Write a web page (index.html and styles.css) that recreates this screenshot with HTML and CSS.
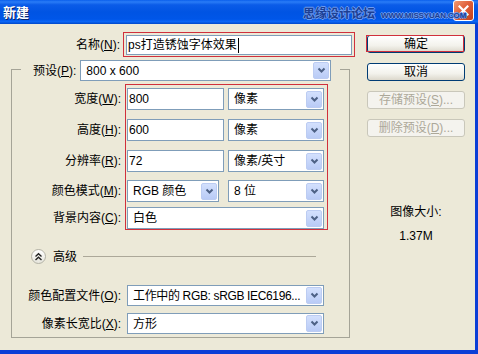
FILE: index.html
```html
<!DOCTYPE html>
<html lang="zh-CN">
<head>
<meta charset="utf-8">
<title>新建</title>
<link rel="stylesheet" href="styles.css">
</head>
<body>
<div class="window">
  <header class="titlebar">
    <span class="title">新建</span>
    <span class="watermark">思缘设计论坛<span class="wm-url">WWW.MISSYUAN.COM</span></span>
    <span class="close"><svg width="11" height="11" viewBox="0 0 11 11"><path d="M1.5 1.5 L9.5 9.5 M9.5 1.5 L1.5 9.5" stroke="#fff" stroke-width="2.2" fill="none" stroke-linecap="square"/></svg></span>
  </header>
  <div class="client">
    <div class="main">
      <div class="name-row">
        <span class="lbl name-lbl">名称(<u>N</u>):</span>
        <div class="mark name-mark">
          <div class="input name-input"><span>ps打造锈蚀字体效果</span><span class="caret"></span></div>
        </div>
      </div>
      <div class="group">
        <div class="group-head">
          <span class="lbl head-lbl">预设(<u>P</u>):</span>
          <div class="select preset"><span class="val">800 x 600</span><span class="drop"><svg width="9" height="7" viewBox="0 0 9 7"><path d="M1.5 1.5 L4.5 4.5 L7.5 1.5" stroke="#4d6185" stroke-width="2" fill="none"/></svg></span></div>
        </div>
        <div class="dims">
          <div class="dim-labels">
            <span class="row">宽度(<u>W</u>):</span>
            <span class="row">高度(<u>H</u>):</span>
            <span class="row">分辨率(<u>R</u>):</span>
            <span class="row g8">颜色模式(<u>M</u>):</span>
            <span class="row g5">背景内容(<u>C</u>):</span>
          </div>
          <div class="mark dim-mark">
            <div class="row">
              <div class="input num">800</div>
              <div class="select unit"><span class="val">像素</span><span class="drop"><svg width="9" height="7" viewBox="0 0 9 7"><path d="M1.5 1.5 L4.5 4.5 L7.5 1.5" stroke="#4d6185" stroke-width="2" fill="none"/></svg></span></div>
            </div>
            <div class="row">
              <div class="input num">600</div>
              <div class="select unit"><span class="val">像素</span><span class="drop"><svg width="9" height="7" viewBox="0 0 9 7"><path d="M1.5 1.5 L4.5 4.5 L7.5 1.5" stroke="#4d6185" stroke-width="2" fill="none"/></svg></span></div>
            </div>
            <div class="row">
              <div class="input num">72</div>
              <div class="select unit"><span class="val">像素/英寸</span><span class="drop"><svg width="9" height="7" viewBox="0 0 9 7"><path d="M1.5 1.5 L4.5 4.5 L7.5 1.5" stroke="#4d6185" stroke-width="2" fill="none"/></svg></span></div>
            </div>
            <div class="row g8">
              <div class="select mode"><span class="val">RGB 颜色</span><span class="drop"><svg width="9" height="7" viewBox="0 0 9 7"><path d="M1.5 1.5 L4.5 4.5 L7.5 1.5" stroke="#4d6185" stroke-width="2" fill="none"/></svg></span></div>
              <div class="select unit"><span class="val">8 位</span><span class="drop"><svg width="9" height="7" viewBox="0 0 9 7"><path d="M1.5 1.5 L4.5 4.5 L7.5 1.5" stroke="#4d6185" stroke-width="2" fill="none"/></svg></span></div>
            </div>
            <div class="row g5">
              <div class="select full"><span class="val">白色</span><span class="drop"><svg width="9" height="7" viewBox="0 0 9 7"><path d="M1.5 1.5 L4.5 4.5 L7.5 1.5" stroke="#4d6185" stroke-width="2" fill="none"/></svg></span></div>
            </div>
          </div>
        </div>
        <div class="advanced">
          <span class="adv-icon"><svg width="9" height="9" viewBox="0 0 9 9"><path d="M1.5 4.5 L4.5 1.8 L7.5 4.5 M1.5 8 L4.5 5.3 L7.5 8" stroke="#222" stroke-width="1.4" fill="none"/></svg></span>
          <span class="adv-text">高级</span>
          <span class="adv-line"></span>
        </div>
        <div class="field-row first">
          <span class="lbl field-lbl">颜色配置文件(<u>O</u>):</span>
          <div class="select full"><span class="val tight">工作中的 RGB: sRGB IEC6196...</span><span class="drop"><svg width="9" height="7" viewBox="0 0 9 7"><path d="M1.5 1.5 L4.5 4.5 L7.5 1.5" stroke="#4d6185" stroke-width="2" fill="none"/></svg></span></div>
        </div>
        <div class="field-row">
          <span class="lbl field-lbl">像素长宽比(<u>X</u>):</span>
          <div class="select full"><span class="val">方形</span><span class="drop"><svg width="9" height="7" viewBox="0 0 9 7"><path d="M1.5 1.5 L4.5 4.5 L7.5 1.5" stroke="#4d6185" stroke-width="2" fill="none"/></svg></span></div>
        </div>
      </div>
    </div>
    <aside class="side">
      <button class="btn ok">确定</button>
      <button class="btn">取消</button>
      <button class="btn disabled">存储预设(<u>S</u>)...</button>
      <button class="btn disabled">删除预设(<u>D</u>)...</button>
      <div class="img-size">图像大小:</div>
      <div class="img-val">1.37M</div>
    </aside>
  </div>
</div>
</body>
</html>
```

FILE: styles.css
```css
* { box-sizing: border-box; }
body {
  margin: 0;
  font: 12px/14px "Liberation Sans", "Noto Sans CJK SC", sans-serif;
  color: #000;
  background: #ece9d8;
}
u { text-decoration: underline; text-underline-offset: 1px; }

.window {
  width: 478px;
  height: 354px;
  display: flex;
  flex-direction: column;
  background: #ece9d8;
  overflow: hidden;
}

/* title bar */
.titlebar {
  position: relative;
  height: 24px;
  flex: none;
  display: flex;
  align-items: center;
  padding-left: 3px;
  background: linear-gradient(to bottom, #0a5fec 0%, #2a7cf6 8%, #0b5ce8 20%, #0054e3 50%, #0056e8 80%, #0a66f6 90%, #0047c8 100%);
}
.title {
  flex: 1;
  color: #fff;
  font: bold 13px/16px "Noto Sans CJK SC", sans-serif;
  text-shadow: 1px 1px 0 #0a246a;
}
.watermark {
  position: absolute;
  left: 303px;
  top: 5px;
  display: flex;
  align-items: baseline;
  white-space: nowrap;
  color: #1c3f94;
  font: bold 12px/15px "Noto Sans CJK SC", sans-serif;
  text-shadow: -1px 0 #6d9cf0, 1px 0 #6d9cf0, 0 -1px #6d9cf0, 0 1px #6d9cf0;
  z-index: 2;
}
.wm-url {
  margin-left: 6px;
  font: bold 8px/15px "Liberation Sans", sans-serif;
  letter-spacing: -0.15px;
}
.close {
  width: 21px;
  height: 21px;
  margin-right: 4px;
  align-self: flex-start;
  border: 1px solid #fff;
  border-radius: 3px;
  background: linear-gradient(135deg, #f29a72 0%, #e0603a 45%, #c4401c 100%);
  display: flex;
  align-items: center;
  justify-content: center;
}

/* client */
.client {
  flex: 1;
  display: flex;
  border-right: 3px solid #0b3ed6;
  border-bottom: 4px solid #0b3ed6;
}
.main { width: 355px; flex: none; }

.lbl { white-space: nowrap; }
.mark { border: 1px solid #d0303c; }

.name-row {
  display: flex;
  align-items: center;
  margin-top: 8px;
}
.name-lbl { width: 120px; text-align: right; margin-right: 3px; }
.name-mark { width: 232px; padding: 2px 2px 1px 2px; }
.input {
  height: 20px;
  border: 1px solid #7f9db9;
  background: #fff;
  padding-left: 1px;
  display: flex;
  align-items: center;
  white-space: nowrap;
}
.name-input { width: 226px; }
.caret { width: 1px; height: 15px; background: #000; margin-left: 1px; }

/* group box */
.group {
  margin: 12px 0 0 11px;
  width: 339px;
  border: 1px solid #a5a497;
  padding-bottom: 3px;
}
.group-head {
  display: flex;
  align-items: center;
  width: fit-content;
  margin: -10px 0 0 9px;
  padding: 0 9px 0 12px;
  background: #ece9d8;
}
.head-lbl { margin-right: 4px; }

.select {
  height: 21px;
  display: flex;
  align-items: center;
  border: 1px solid #7f9db9;
  background: #fff;
  white-space: nowrap;
}
.select .val { flex: 1; padding-left: 5px; overflow: hidden; }
.select .val.tight { letter-spacing: -0.35px; padding-left: 5px; }
.drop {
  width: 16px;
  height: 17px;
  margin-right: 1px;
  flex: none;
  border-radius: 2px;
  background: linear-gradient(to bottom, #d3e0fd, #b9cbf6);
  border: 1px solid #bcccf2;
  display: flex;
  align-items: center;
  justify-content: center;
}
.preset { width: 251px; }

.dims { display: flex; margin-top: 3px; }
.dim-labels {
  width: 109px;
  padding-top: 4px;
  display: flex;
  flex-direction: column;
  align-items: flex-end;
}
.dim-labels .row { height: 22px; line-height: 22px; white-space: nowrap; }
.dim-mark {
  margin-left: 4px;
  width: 203px;
  padding: 3px 3px 0 1px;
}
.dim-mark .row {
  height: 22px;
  display: flex;
  justify-content: space-between;
}
.row + .row { margin-top: 9px; }
.row.g8 { margin-top: 8px; }
.row.g5 { margin-top: 5px; }
.dim-mark .input, .dim-mark .select { height: 22px; }
.num { width: 97px; }
.unit { width: 96px; }
.mode { width: 92px; }
.full { width: 197px; }

.advanced {
  display: flex;
  align-items: center;
  height: 15px;
  margin-top: 19px;
  padding-left: 19px;
}
.adv-icon {
  width: 15px;
  height: 15px;
  border-radius: 50%;
  border: 1px solid #b3b2a6;
  background: linear-gradient(to bottom, #ffffff, #e6e5dc);
  display: flex;
  align-items: center;
  justify-content: center;
}
.adv-text { margin-left: 7px; }
.adv-line {
  flex: 1;
  height: 1px;
  background: #aca899;
  margin: 0 33px 0 6px;
}

.field-row { display: flex; align-items: center; margin-top: 7px; }
.field-row.first { margin-top: 21px; }
.field-lbl { width: 109px; text-align: right; margin-right: 6px; }

/* side column */
.side {
  width: 98px;
  margin-left: 12px;
  padding-top: 11px;
  display: flex;
  flex-direction: column;
}
.btn {
  position: relative;
  height: 18px;
  padding: 0;
  border: 1px solid #003c74;
  border-radius: 3px;
  background: linear-gradient(to bottom, #ffffff 0%, #f3f2ec 60%, #dcd8cc 100%);
  font: 12px/16px "Liberation Sans", "Noto Sans CJK SC", sans-serif;
  color: #000;
  text-align: center;
}
.btn + .btn { margin-top: 10px; }
.btn.disabled {
  border-color: #c9c7ba;
  background: #f4f3ee;
  color: #aca899;
}
.btn.ok::after {
  content: "";
  position: absolute;
  left: -2px;
  top: -1px;
  right: 0;
  bottom: 0;
  border: 1px solid #d0303c;
}
.img-size { margin-top: 68px; text-align: center; }
.img-val { margin-top: 10px; text-align: center; }
```
